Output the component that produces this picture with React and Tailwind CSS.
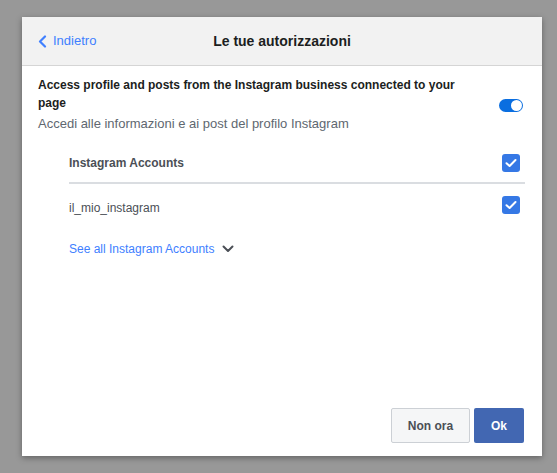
import React from 'react';

function Check() {
  return (
    <div className="w-[18px] h-[18px] rounded-[3px] bg-[#3578e5] flex items-center justify-center">
      <svg width="12" height="10" viewBox="0 0 12 10" fill="none">
        <path d="M1.5 5.2 L4.6 8 L10.5 2" stroke="white" strokeWidth="2" strokeLinecap="round" strokeLinejoin="round" />
      </svg>
    </div>
  );
}

export default function App() {
  return (
    <div className="w-[557px] h-[473px] bg-[#989898] pt-[17px] pl-[22px] font-['Liberation_Sans',Arial,sans-serif]">
      <div className="w-[520px] h-[439px] bg-white flex flex-col shadow-[0_2px_6px_rgba(0,0,0,0.35)]">
        <div className="relative h-[49px] bg-[#f2f2f2] border-b border-[#d5d5d5] flex items-center justify-center shrink-0">
          <div className="absolute left-[16px] top-0 h-full flex items-center gap-[6px] text-[#4080ff] text-[13px]">
            <svg width="9" height="13" viewBox="0 0 9 13" fill="none">
              <path d="M7 1.5 L2 6.5 L7 11.5" stroke="#4080ff" strokeWidth="2.2" strokeLinecap="round" strokeLinejoin="round" />
            </svg>
            <span>Indietro</span>
          </div>
          <span className="text-[14px] font-bold text-[#1c1e21]">Le tue autorizzazioni</span>
        </div>

        <div className="flex-1 flex flex-col px-[16px] pt-[10px]">
          <div className="flex items-center justify-between pr-[3px]">
            <div className="w-[440px]">
              <div className="text-[12px] font-bold leading-[18px] text-[#1c1e21]">
                Access profile and posts from the Instagram business connected to your page
              </div>
              <div className="text-[13px] leading-[20px] mt-[2px] text-[#606770]">
                Accedi alle informazioni e ai post del profilo Instagram
              </div>
            </div>
            <div className="w-[24px] h-[13px] rounded-full bg-[#0a6ee0] flex items-center justify-end pr-[1px] mt-[1px]">
              <div className="w-[11px] h-[11px] rounded-full bg-white" />
            </div>
          </div>

          <div className="ml-[31px] mr-[1px] mt-[10px]">
            <div className="flex items-center justify-between h-[40px] pr-[5px] border-b-2 border-[#dadde1]">
              <span className="text-[12px] font-bold text-[#4b4f56]">Instagram Accounts</span>
              <Check />
            </div>
            <div className="flex items-center justify-between h-[48px] pr-[5px]">
              <span className="text-[12px] text-[#4b4f56]">il_mio_instagram</span>
              <div className="-mt-[6px]"><Check /></div>
            </div>
            <div className="flex items-center gap-[8px] -mt-[3px] h-[40px]">
              <span className="text-[12px] text-[#4080ff]">See all Instagram Accounts</span>
              <svg width="12" height="8" viewBox="0 0 12 8" fill="none">
                <path d="M1.5 1.5 L6 6 L10.5 1.5" stroke="#4b4f56" strokeWidth="2" strokeLinecap="round" strokeLinejoin="round" />
              </svg>
            </div>
          </div>
        </div>

        <div className="flex justify-end gap-[4px] pr-[18px] pb-[13px]">
          <button className="w-[79px] h-[35px] rounded-[2px] bg-[#f5f6f7] border border-[#ccd0d5] text-[12px] font-bold text-[#4b4f56]">
            Non ora
          </button>
          <button className="w-[50px] h-[35px] rounded-[2px] bg-[#4267b2] text-[12px] font-bold text-white">
            Ok
          </button>
        </div>
      </div>
    </div>
  );
}
